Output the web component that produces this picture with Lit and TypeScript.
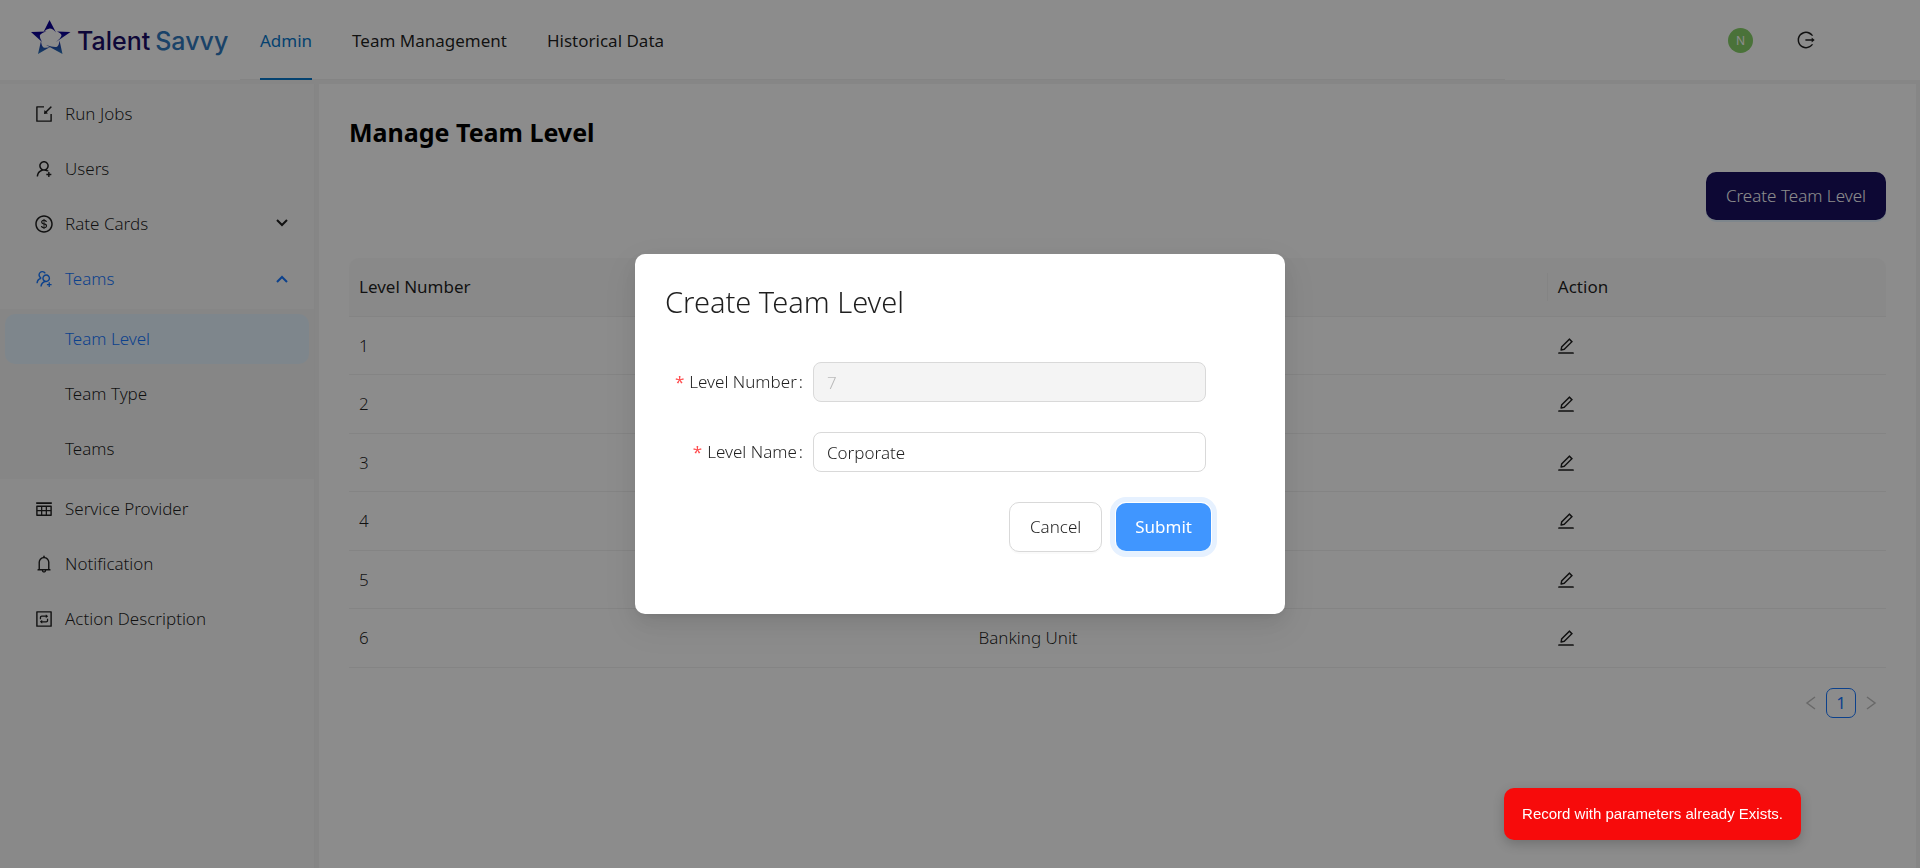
import { LitElement, html, css, svg, nothing } from "lit";
import { customElement, property, state } from "lit/decorators.js";
import { classMap } from "lit/directives/class-map.js";

const ICONS: Record<string, string> = {
  import:
    "M880 912H144c-17.7 0-32-14.3-32-32V144c0-17.7 14.3-32 32-32h360c4.4 0 8 3.6 8 8v56c0 4.4-3.6 8-8 8H184v656h656V520c0-4.4 3.6-8 8-8h56c4.4 0 8 3.6 8 8v360c0 17.7-14.3 32-32 32zM653.3 424.6l52.2 52.2c4.7 4.7 1.9 12.8-4.7 13.6l-179.4 21c-5.1.6-9.5-3.7-8.9-8.9l21-179.4c.8-6.6 8.9-9.4 13.6-4.7l52.4 52.4 256.2-256.2c3.1-3.1 8.2-3.1 11.3 0l42.4 42.4c3.1 3.1 3.1 8.2 0 11.3L653.3 424.6z",
  userAdd:
    "M678.3 642.4c24.2-13 51.9-20.4 81.4-20.4h.1c3 0 4.4-3.6 2.2-5.6a371.67 371.67 0 00-103.7-65.8c-.4-.2-.8-.3-1.2-.5C719.2 505 759.6 431.7 759.6 349c0-137-110.8-248-247.5-248S264.7 212 264.7 349c0 82.7 40.4 156 102.6 201.1-.4.2-.8.3-1.2.5-44.7 18.9-84.8 46-119.3 80.6a373.42 373.42 0 00-80.4 119.5A373.6 373.6 0 00137 888.8a8 8 0 008 8.2h59.9c4.3 0 7.9-3.5 8-7.8 2-77.2 32.9-149.5 87.6-204.3C357 628.2 432.2 597 512.2 597c56.7 0 111.1 15.7 158 45.1a8.1 8.1 0 008.1.3zM512.2 521c-45.8 0-88.9-17.9-121.4-50.4A171.2 171.2 0 01340.5 349c0-45.9 17.9-89.1 50.3-121.6S466.3 177 512.2 177s88.9 17.9 121.4 50.4A171.2 171.2 0 01683.9 349c0 45.9-17.9 89.1-50.3 121.6C601.1 503.1 558 521 512.2 521zM880 759h-84v-84c0-4.4-3.6-8-8-8h-56c-4.4 0-8 3.6-8 8v84h-84c-4.4 0-8 3.6-8 8v56c0 4.4 3.6 8 8 8h84v84c0 4.4 3.6 8 8 8h56c4.4 0 8-3.6 8-8v-84h84c4.4 0 8-3.6 8-8v-56c0-4.4-3.6-8-8-8z",
  dollar:
    "M512 64C264.6 64 64 264.6 64 512s200.6 448 448 448 448-200.6 448-448S759.4 64 512 64zm0 820c-205.4 0-372-166.6-372-372s166.6-372 372-372 372 166.6 372 372-166.6 372-372 372zm47.7-395.2l-25.4-5.9V348.6c38 5.2 61.5 29 65.5 58.2.5 4 3.9 6.9 7.9 6.9h44.9c4.7 0 8.4-4.1 8-8.8-6.1-62.3-57.4-102.3-125.9-109.2V263c0-4.4-3.6-8-8-8h-28.1c-4.4 0-8 3.6-8 8v33c-70.8 6.9-126.2 46-126.2 119 0 67.6 49.8 100.2 102.1 112.7l24.7 6.3v142.7c-44.2-5.9-69-29.5-74.1-61.3-.6-3.8-4-6.6-7.9-6.6H363c-4.7 0-8.4 4-8 8.7 4.5 55 46.2 105.6 135.2 112.1V761c0 4.4 3.6 8 8 8h28.4c4.4 0 8-3.6 8-8.1l-.2-31.7c78.3-6.9 134.3-48.8 134.3-124-.1-69.4-44.2-100.4-109-116.4zm-68.6-16.2c-5.6-1.6-10.3-3.1-15-5-33.8-12.2-49.5-31.9-49.5-57.3 0-36.3 27.5-57 64.5-61.7v124zM534.3 677V543.3c3.1.9 5.9 1.6 8.8 2.2 47.3 14.4 63.2 34.4 63.2 65.1 0 39.1-29.4 62.6-72 66.4z",
  groupAdd:
    "M892 772h-80v-80c0-4.4-3.6-8-8-8h-48c-4.4 0-8 3.6-8 8v80h-80c-4.4 0-8 3.6-8 8v48c0 4.4 3.6 8 8 8h80v80c0 4.4 3.6 8 8 8h48c4.4 0 8-3.6 8-8v-80h80c4.4 0 8-3.6 8-8v-48c0-4.4-3.6-8-8-8zM373.5 498.4c-.9-8.7-1.4-17.5-1.4-26.4 0-15.9 1.5-31.4 4.3-46.5.7-3.6-1.2-7.3-4.5-8.8-13.6-6.1-26.1-14.5-36.9-25.1a127.54 127.54 0 01-38.7-95.4c.9-32.1 13.8-62.6 36.3-85.6 24.7-25.3 57.9-39.1 93.2-38.7 31.9.3 62.7 12.6 86 34.4 7.9 7.4 14.7 15.6 20.4 24.4 2 3.1 5.9 4.4 9.3 3.2 17.6-6.1 36.2-10.4 55.3-12.4 5.6-.6 8.8-6.6 6.3-11.6-32.5-64.3-98.9-108.7-175.7-109.9-110.8-1.7-203.2 89.2-203.2 200 0 62.8 28.9 118.8 74.2 155.5-31.8 14.7-61.1 35-86.5 60.4-54.8 54.7-85.8 126.9-87.8 204a8 8 0 008 8.2h56.1c4.3 0 7.9-3.4 8-7.7 1.9-58 25.4-112.3 66.7-153.5 29.4-29.4 65.4-49.8 104.7-59.7 3.8-1.1 6.4-4.8 5.9-8.8zM824 472c0-109.4-87.9-198.3-196.9-200C516.3 270.3 424 361.2 424 472c0 62.8 29 118.8 74.2 155.5a300.95 300.95 0 00-86.4 60.4C357 742.6 326 814.8 324 891.8a8 8 0 008 8.2h56c4.3 0 7.9-3.4 8-7.7 1.9-58 25.4-112.3 66.7-153.5C505.8 695.7 563 672 624 672c110.4 0 200-89.5 200-200zm-109.5 90.5C690.3 586.7 658.2 600 624 600s-66.3-13.3-90.5-37.5a127.26 127.26 0 01-37.5-91.8c.3-32.8 13.4-64.5 36.3-88 24-24.6 56.1-38.3 90.4-38.7 33.9-.3 66.8 12.9 91 36.6 24.8 24.3 38.4 56.8 38.4 91.4-.1 34.2-13.4 66.3-37.6 90.5z",
  tableRows:
    "M878.7 336H145.3c-18.4 0-33.3 14.3-33.3 32v464c0 17.7 14.9 32 33.3 32h733.3c18.4 0 33.3-14.3 33.3-32V368c.1-17.7-14.8-32-33.2-32zM360 792H184V632h176v160zm0-224H184V408h176v160zm240 224H424V632h176v160zm0-224H424V408h176v160zm240 224H664V632h176v160zm0-224H664V408h176v160zm64-408H120c-4.4 0-8 3.6-8 8v80c0 4.4 3.6 8 8 8h784c4.4 0 8-3.6 8-8v-80c0-4.4-3.6-8-8-8z",
  bell:
    "M816 768h-24V428c0-141.1-104.3-257.7-240-277.1V112c0-22.1-17.9-40-40-40s-40 17.9-40 40v38.9c-135.7 19.4-240 136-240 277.1v340h-24c-17.7 0-32 14.3-32 32v32c0 4.4 3.6 8 8 8h216c0 61.8 50.2 112 112 112s112-50.2 112-112h216c4.4 0 8-3.6 8-8v-32c0-17.7-14.3-32-32-32zM512 888c-26.5 0-48-21.5-48-48h96c0 26.5-21.5 48-48 48zM304 768V428c0-55.6 21.6-107.8 60.9-147.1S456.4 220 512 220c55.6 0 107.8 21.6 147.1 60.9S720 372.4 720 428v340H304z",
  interaction:
    "M880 112H144c-17.7 0-32 14.3-32 32v736c0 17.7 14.3 32 32 32h736c17.7 0 32-14.3 32-32V144c0-17.7-14.3-32-32-32zm-40 728H184V184h656v656zM304.8 524h50.7c3.7 0 6.8-3 6.8-6.8v-78.9c0-19.7 15.9-35.6 35.5-35.6h205.7v53.4c0 5.7 6.5 8.8 10.9 5.3l109.1-85.7c3.5-2.7 3.5-8 0-10.7l-109.1-85.7c-4.4-3.5-10.9-.3-10.9 5.3V338H397.7c-55.1 0-99.7 44.8-99.7 100.1V517c0 4 3 7 6.8 7zm-4.2 134.9l109.1 85.7c4.4 3.5 10.9.3 10.9-5.3v-53.4h205.7c55.1 0 99.7-44.8 99.7-100.1v-78.9c0-3.7-3-6.8-6.8-6.8h-50.7c-3.7 0-6.8 3-6.8 6.8v78.9c0 19.7-15.9 35.6-35.5 35.6H420.6V568c0-5.7-6.5-8.8-10.9-5.3l-109.1 85.7c-3.5 2.5-3.5 7.8 0 10.5z",
  edit:
    "M257.7 752c2 0 4-.2 6-.5L431.9 722c2-.4 3.9-1.3 5.3-2.8l423.9-423.9a9.96 9.96 0 000-14.1L694.9 114.9c-1.9-1.9-4.4-2.9-7.1-2.9s-5.2 1-7.1 2.9L256.8 538.8c-1.5 1.5-2.4 3.3-2.8 5.3l-29.5 168.2a33.5 33.5 0 009.4 29.8c6.6 6.4 14.9 9.9 23.8 9.9zm67.4-174.4L687.8 215l73.3 73.3-362.7 362.6-88.9 15.7 15.6-89zM880 836H144c-17.7 0-32 14.3-32 32v36c0 4.4 3.6 8 8 8h784c4.4 0 8-3.6 8-8v-36c0-17.7-14.3-32-32-32z",
  logout:
    "M868 732h-70.3c-4.8 0-9.3 2.1-12.3 5.8-7 8.5-14.5 16.7-22.4 24.5a353.84 353.84 0 01-112.7 75.9A352.8 352.8 0 01512.4 866c-47.9 0-94.3-9.4-137.9-27.8a353.84 353.84 0 01-112.7-75.9 353.28 353.28 0 01-76-112.5C167.3 606.2 158 559.9 158 512s9.4-94.2 27.8-137.8c17.8-42.1 43.4-80 76-112.5s70.5-58.1 112.7-75.9c43.6-18.4 90-27.8 137.9-27.8 47.9 0 94.3 9.3 137.9 27.8 42.2 17.8 80.1 43.4 112.7 75.9 7.9 7.9 15.3 16.1 22.4 24.5 3 3.7 7.6 5.8 12.3 5.8H868c6.3 0 10.2-7 6.7-12.3C798 160.5 663.8 81.6 511.3 82 271.7 82.6 79.6 277.1 82 516.4 84.4 751.9 276.2 942 512.4 942c152.1 0 285.7-78.8 362.3-197.7 3.4-5.3-.4-12.3-6.7-12.3zm88.9-226.3L815 393.7c-5.3-4.2-13-.4-13 6.3v76H488c-4.4 0-8 3.6-8 8v56c0 4.4 3.6 8 8 8h314v76c0 6.7 7.8 10.5 13 6.3l141.9-112a8 8 0 000-12.6z",
};

const icon = (name: string) =>
  svg`<svg class="icon" viewBox="0 0 1024 1024" aria-hidden="true"><path d=${ICONS[name]}></path></svg>`;

const chevron = (points: string, cls: string) =>
  svg`<svg class=${cls} viewBox="0 0 16 16" aria-hidden="true"><polyline points=${points}></polyline></svg>`;

const sharedStyles = css`
  *,
  *::before,
  *::after {
    box-sizing: border-box;
  }
  .icon {
    display: block;
    flex: none;
    width: 20px;
    height: 20px;
    fill: currentColor;
  }
  a {
    color: inherit;
    text-decoration: none;
  }
  button {
    font: inherit;
    color: inherit;
    cursor: pointer;
  }
`;

@customElement("app-header")
export class AppHeader extends LitElement {
  static styles = [
    sharedStyles,
    css`
      :host {
        display: flex;
        height: 80px;
        background: #fff;
        font-weight: 400;
      }
      .brand {
        display: flex;
        flex: none;
        gap: 6px;
        width: 240px;
        padding: 20px 0 0 31px;
        color: #1a0d66;
        font: 500 25px/42px Inter, sans-serif;
        white-space: nowrap;
      }
      .star {
        flex: none;
        width: 40px;
        height: 34px;
      }
      .brand-name {
        display: flex;
        gap: 5px;
        height: 42px;
      }
      .brand-accent {
        color: #3179bd;
      }
      .nav {
        display: flex;
        flex: 1;
        border-bottom: 1px solid #f0f0f0;
        line-height: 82px;
      }
      .nav-link {
        height: 80px;
        margin: 0 20px;
        white-space: nowrap;
      }
      .nav-link.active {
        color: #0878cc;
        border-bottom: 2px solid #0878cc;
      }
      .tools {
        display: flex;
        flex: none;
        align-items: center;
        justify-content: flex-end;
        gap: 43px;
        width: 415px;
        padding-right: 104px;
      }
      .avatar {
        width: 25px;
        height: 25px;
        border-radius: 50%;
        background: #87d068;
        color: #fff;
        font-size: 12px;
        line-height: 26px;
        text-align: center;
      }
      .logout {
        padding: 0;
        border: 0;
        background: none;
      }
    `,
  ];

  render() {
    return html`
      <a class="brand" href="#home">
        <svg class="star" viewBox="0 0 40 34" aria-hidden="true">
          <defs>
            <linearGradient id="ink" x1="0" y1="0" x2="0" y2="34" gradientUnits="userSpaceOnUse">
              <stop offset="0.4" stop-color="#0c0094"></stop>
              <stop offset="1" stop-color="#2c76b8"></stop>
            </linearGradient>
          </defs>
          <g fill="url(#ink)">
            <path d="M18.500 0 L25 12.500 Q22 8.500 18.800 8.500 Q15.500 8.500 12.500 12 Z"></path>
            <path d="M0 12 L15.500 11.500 Q10 13 8.800 15.500 Q8.500 18 11 22 Z"></path>
            <path d="M39.500 12 L26 11.500 Q30.500 13.500 30.500 15.500 Q30 18 25 22 Z"></path>
            <path d="M7 34 L10 21 Q10.500 26 12.500 27.500 Q15 28.500 20 26.500 Z"></path>
            <path d="M31.500 34 L28.500 20.500 Q28 26 25.500 27 Q22 27.500 15 25 Z"></path>
          </g>
        </svg>
        <span class="brand-name"><span>Talent</span><span class="brand-accent">Savvy</span></span>
      </a>
      <nav class="nav" aria-label="Main">
        <a class="nav-link active" href="#admin">Admin</a>
        <a class="nav-link" href="#team">Team Management</a>
        <a class="nav-link" href="#history">Historical Data</a>
      </nav>
      <div class="tools">
        <span class="avatar">N</span>
        <button class="logout" type="button" aria-label="Log out">${icon("logout")}</button>
      </div>
    `;
  }
}

interface MenuEntry {
  label: string;
  icon: string;
  children?: string[];
  open?: boolean;
}

const MENU: MenuEntry[] = [
  { label: "Run Jobs", icon: "import" },
  { label: "Users", icon: "userAdd" },
  { label: "Rate Cards", icon: "dollar", children: [] },
  { label: "Teams", icon: "groupAdd", open: true, children: ["Team Level", "Team Type", "Teams"] },
  { label: "Service Provider", icon: "tableRows" },
  { label: "Notification", icon: "bell" },
  { label: "Action Description", icon: "interaction" },
];

@customElement("side-menu")
export class SideMenu extends LitElement {
  static styles = [
    sharedStyles,
    css`
      :host {
        display: block;
        background: #f9f9f9;
        border-right: 1px solid #f2f2f2;
      }
      .menu {
        display: flex;
        flex-direction: column;
        gap: 5px;
        padding: 5px 0;
      }
      .item {
        display: flex;
        align-items: center;
        gap: 11px;
        width: auto;
        height: 50px;
        margin: 0 5px;
        padding: 0 19px 0 29px;
        border: 0;
        border-radius: 10px;
        background: none;
        text-align: left;
      }
      .item.current {
        color: #1677ff;
      }
      .label {
        flex: 1;
      }
      .arrow {
        width: 16px;
        height: 16px;
        fill: none;
        stroke: currentColor;
        stroke-width: 2;
      }
      .submenu {
        display: flex;
        flex-direction: column;
        gap: 5px;
        padding: 5px 0;
        background: #f4f4f4;
      }
      .submenu .item {
        padding-left: 60px;
      }
      .submenu .selected {
        background: #e6f4ff;
        color: #1677ff;
      }
    `,
  ];

  private renderEntry(entry: MenuEntry) {
    if (!entry.children) {
      return html`<a class="item" href="#"
        >${icon(entry.icon)}<span class="label">${entry.label}</span></a
      >`;
    }
    return html`
      <button
        type="button"
        class=${classMap({ item: true, current: !!entry.open })}
        aria-expanded=${entry.open ? "true" : "false"}
      >
        ${icon(entry.icon)}<span class="label">${entry.label}</span>
        ${chevron(entry.open ? "3,11 8,6 13,11" : "3,4 8,9 13,4", "arrow")}
      </button>
      ${entry.open
        ? html`<div class="submenu">
            ${entry.children.map(
              (label, i) =>
                html`<a class=${classMap({ item: true, selected: i === 0 })} href="#">${label}</a>`
            )}
          </div>`
        : nothing}
    `;
  }

  render() {
    return html`<nav class="menu" aria-label="Admin">${MENU.map((e) => this.renderEntry(e))}</nav>`;
  }
}

interface TeamLevel {
  number: number;
  name?: string;
}

@customElement("team-level-page")
export class TeamLevelPage extends LitElement {
  static styles = [
    sharedStyles,
    css`
      :host {
        display: block;
        padding: 28px 30px;
        background: #fff;
      }
      .title {
        margin: 0;
        color: #000;
        font-size: 25px;
        font-weight: 700;
        line-height: 40px;
      }
      .toolbar {
        display: flex;
        justify-content: flex-end;
        margin: 20px 0 38px;
      }
      .create {
        height: 48px;
        padding: 0 20px;
        border: 0;
        border-radius: 10px;
        background: #180f5f;
        box-shadow: 0 2px 0 rgba(5, 145, 255, 0.1);
        color: #fff;
      }
      .levels {
        width: 100%;
        border-collapse: separate;
        border-spacing: 0;
        table-layout: fixed;
      }
      .levels th,
      .levels td {
        height: 58px;
        padding: 0 10px;
        border-bottom: 1px solid #f0f0f0;
        text-align: left;
      }
      .levels th,
      .levels tr:nth-child(even) td {
        height: 59px;
      }
      .levels th {
        position: relative;
        background: #fafafa;
        font-weight: 400;
      }
      .levels th:not(:last-child)::after {
        content: "";
        position: absolute;
        top: 15px;
        right: 0;
        width: 1px;
        height: 28px;
        background: #f0f0f0;
      }
      .levels th:first-child {
        border-top-left-radius: 10px;
      }
      .levels th:last-child {
        border-top-right-radius: 10px;
      }
      .col-number {
        width: 40.3%;
      }
      .col-name {
        width: 37.7%;
      }
      .edit {
        display: block;
        margin-left: -2px;
        padding: 0;
        border: 0;
        background: none;
      }
      .pager {
        display: flex;
        justify-content: flex-end;
        margin-top: 20px;
      }
      .page {
        display: grid;
        place-items: center;
        width: 30px;
        height: 30px;
        padding: 0;
        border: 1px solid transparent;
        border-radius: 7px;
        background: none;
      }
      .page.active {
        border-color: #1677ff;
        color: #1677ff;
        font-weight: 400;
      }
      .page-arrow {
        width: 16px;
        height: 16px;
        fill: none;
        stroke: #bfbfbf;
        stroke-width: 1.5;
      }
    `,
  ];

  @property({ attribute: false }) levels: TeamLevel[] = [];

  render() {
    return html`
      <h1 class="title">Manage Team Level</h1>
      <div class="toolbar"><button class="create" type="button">Create Team Level</button></div>
      <table class="levels">
        <colgroup>
          <col class="col-number" />
          <col class="col-name" />
          <col />
        </colgroup>
        <thead>
          <tr>
            <th scope="col">Level Number</th>
            <th scope="col">Level Name</th>
            <th scope="col">Action</th>
          </tr>
        </thead>
        <tbody>
          ${this.levels.map(
            (level) => html`<tr>
              <td>${level.number}</td>
              <td>${level.name ?? nothing}</td>
              <td>
                <button class="edit" type="button" aria-label="Edit level ${level.number}">
                  ${icon("edit")}
                </button>
              </td>
            </tr>`
          )}
        </tbody>
      </table>
      <nav class="pager" aria-label="Pages">
        <button class="page" type="button" aria-label="Previous" disabled>
          ${chevron("12,2 4,8 12,14", "page-arrow")}
        </button>
        <button class="page active" type="button" aria-current="page">1</button>
        <button class="page" type="button" aria-label="Next" disabled>
          ${chevron("4,2 12,8 4,14", "page-arrow")}
        </button>
      </nav>
    `;
  }
}

@customElement("level-dialog")
export class LevelDialog extends LitElement {
  static styles = [
    sharedStyles,
    css`
      :host {
        position: fixed;
        inset: 0;
        display: grid;
        place-items: center;
        background: rgba(0, 0, 0, 0.45);
      }
      .dialog {
        width: 650px;
        max-width: 100%;
        padding: 24px 30px 62px;
        border-radius: 10px;
        background: #fff;
        box-shadow: 0 8px 20px rgba(0, 0, 0, 0.08), 0 4px 8px -5px rgba(0, 0, 0, 0.12),
          0 12px 36px 10px rgba(0, 0, 0, 0.05);
      }
      .heading {
        margin: 0 0 36px;
        font-size: 29px;
        font-weight: 300;
        line-height: 48px;
      }
      .form {
        display: grid;
        grid-template-columns: 138px 1fr;
        gap: 30px 10px;
        align-items: center;
        padding-right: 49px;
      }
      .label {
        text-align: right;
        white-space: nowrap;
      }
      .label::before {
        content: "*";
        margin-right: 5px;
        color: #ff4d4f;
        font-weight: 400;
      }
      .label::after {
        content: ":";
        margin-left: 2px;
      }
      .input {
        width: 100%;
        min-width: 0;
        height: 40px;
        padding: 0 13px;
        border: 1px solid #d9d9d9;
        border-radius: 8px;
        background: #fff;
        color: inherit;
        font: inherit;
      }
      .input:disabled {
        background: #f4f4f4;
        color: rgba(0, 0, 0, 0.25);
      }
      .actions {
        display: flex;
        align-items: center;
        justify-content: flex-end;
        gap: 14px;
        margin-top: 30px;
        padding-right: 44px;
      }
      .btn {
        height: 50px;
        padding: 0 20px;
        border: 1px solid #d9d9d9;
        border-radius: 10px;
        background: #fff;
        box-shadow: 0 2px 0 rgba(0, 0, 0, 0.02);
      }
      .btn.primary {
        height: 48px;
        padding: 0 19px;
        border: 0;
        background: #4096ff;
        box-shadow: 0 2px 0 rgba(5, 145, 255, 0.1);
        outline: 5px solid #e6f1ff;
        outline-offset: 1px;
        color: #fff;
        font-weight: 400;
      }
    `,
  ];

  render() {
    return html`
      <section class="dialog" role="dialog" aria-modal="true" aria-labelledby="heading">
        <h2 class="heading" id="heading">Create Team Level</h2>
        <form @submit=${(e: Event) => e.preventDefault()}>
          <div class="form">
            <label class="label" for="number">Level Number</label>
            <input class="input" id="number" type="text" value="7" disabled />
            <label class="label" for="name">Level Name</label>
            <input class="input" id="name" type="text" value="Corporate" />
          </div>
          <div class="actions">
            <button class="btn" type="button">Cancel</button>
            <button class="btn primary" type="submit">Submit</button>
          </div>
        </form>
      </section>
    `;
  }
}

@customElement("app-root")
export class AppRoot extends LitElement {
  static styles = [
    sharedStyles,
    css`
      :host {
        display: flex;
        flex-direction: column;
        min-height: 100vh;
        background: #f5f5f5;
        color: rgba(0, 0, 0, 0.88);
        font: 300 17px/28px "Noto Sans", "Open Sans", sans-serif;
      }
      .body {
        display: grid;
        flex: 1;
        grid-template-columns: 315px 1fr;
        gap: 4px;
        padding: 4px 4px 0 0;
      }
      .toast {
        position: fixed;
        right: 119px;
        bottom: 28px;
        padding: 12px 18px;
        border-radius: 10px;
        background: #f70b0b;
        box-shadow: 0 4px 12px rgba(0, 0, 0, 0.2);
        color: #fff;
        font: 400 15px/28px "Liberation Sans", Arial, sans-serif;
      }
    `,
  ];

  @state() private levels: TeamLevel[] = [
    { number: 1 },
    { number: 2 },
    { number: 3 },
    { number: 4 },
    { number: 5 },
    { number: 6, name: "Banking Unit" },
  ];

  render() {
    return html`
      <app-header></app-header>
      <div class="body">
        <side-menu></side-menu>
        <team-level-page .levels=${this.levels}></team-level-page>
      </div>
      <level-dialog></level-dialog>
      <div class="toast" role="alert">Record with parameters already Exists.</div>
    `;
  }
}
